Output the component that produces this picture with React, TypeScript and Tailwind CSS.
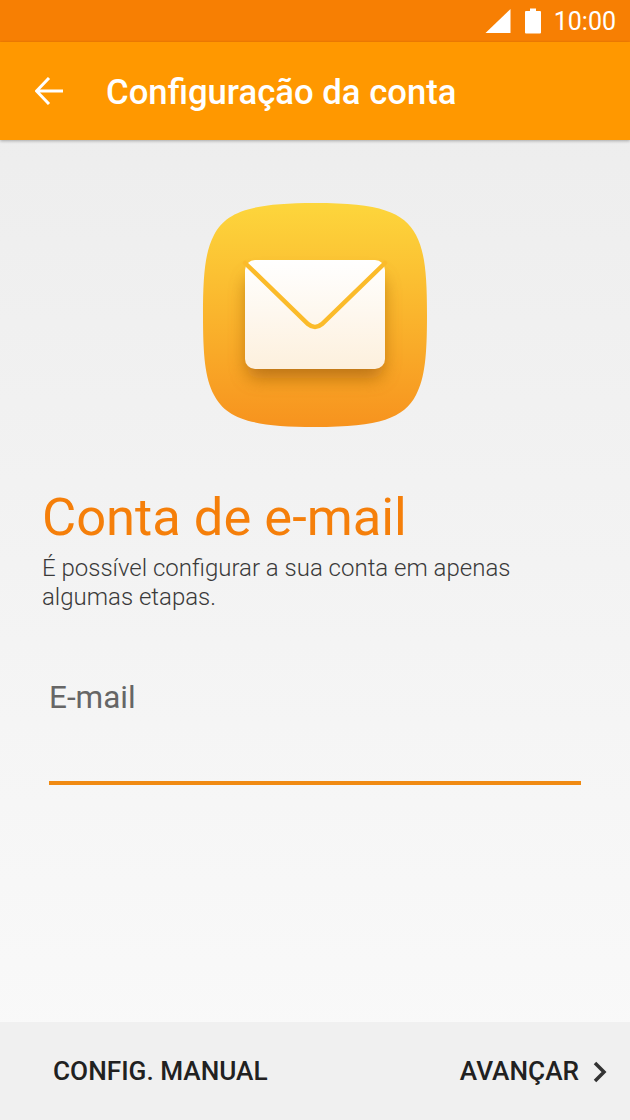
import React from "react";

function MailIcon() {
  return (
    <svg width="250" height="250" viewBox="0 0 250 250" aria-hidden="true">
      <defs>
        <linearGradient id="tile" x1="0" y1="0" x2="0" y2="1">
          <stop offset="0" stopColor="#fdd63c" />
          <stop offset="1" stopColor="#f7931e" />
        </linearGradient>
        <linearGradient id="paper" x1="0" y1="0" x2="0" y2="1">
          <stop offset="0" stopColor="#ffffff" />
          <stop offset="1" stopColor="#fdf0dd" />
        </linearGradient>
        <filter id="drop" x="-30%" y="-30%" width="160%" height="170%">
          <feGaussianBlur stdDeviation="9" />
        </filter>
      </defs>
      <path
        d="M125 13 C60 13 36 22 24 45 C15 62 13 85 13 125 C13 165 15 188 24 205 C36 228 60 237 125 237 C190 237 214 228 226 205 C235 188 237 165 237 125 C237 85 235 62 226 45 C214 22 190 13 125 13 Z"
        fill="url(#tile)"
      />
      <rect x="57" y="86" width="136" height="102" rx="10" fill="#a05f08" opacity="0.7" filter="url(#drop)" />
      <rect x="55" y="70" width="140" height="109" rx="10" fill="url(#paper)" />
      <path
        d="M55 73 L118 134 Q125 140 132 134 L195 73"
        fill="none"
        stroke="#fbbb2a"
        strokeWidth="4.5"
        strokeLinecap="round"
      />
    </svg>
  );
}

export default function App() {
  return (
    <div className="flex h-[1120px] w-[630px] flex-col overflow-hidden bg-gradient-to-b from-[#ececec] to-[#fafafa] font-['Roboto',sans-serif]">
      <div className="flex h-[42px] shrink-0 items-center justify-end bg-[#f77f03] pr-[14px] text-white">
        <svg width="26" height="26" viewBox="0 0 26 26" aria-hidden="true" className="mr-[13px]">
          <path d="M0.5 25 L25.5 1 V25 Z" fill="#ffffff" />
        </svg>
        <svg width="18" height="26" viewBox="0 0 18 26" aria-hidden="true" className="mr-[12px]">
          <path d="M6 0.5 H12 V3 H16 A1 1 0 0 1 17 4 V24.5 A1 1 0 0 1 16 25.5 H2 A1 1 0 0 1 1 24.5 V4 A1 1 0 0 1 2 3 H6 Z" fill="#ffffff" />
        </svg>
        <span className="text-[25px] leading-none">10:00</span>
      </div>

      <header className="z-10 flex h-[98px] shrink-0 items-center bg-[#ff9800] pl-[35px] text-white shadow-[0_1px_3px_rgba(0,0,0,0.3)]">
        <svg width="28" height="28" viewBox="0 0 28 28" aria-hidden="true" fill="none" stroke="#ffffff" strokeWidth="3">
          <path d="M28 14 H2 M14 1 L1.5 14 L14 27" />
        </svg>
        <h1 className="ml-[43px] pt-[2px] text-[34.7px] font-medium leading-none">Configuração da conta</h1>
      </header>

      <main className="flex min-h-0 flex-1 flex-col">
        <div className="mt-[50px] flex justify-center">
          <MailIcon />
        </div>
        <div className="pl-[42px] pr-[42px]">
          <h2 className="mt-[44px] text-[52.5px] leading-[66px] text-[#f57f0a]">Conta de e-mail</h2>
          <p className="mt-[4px] text-[24px] font-light leading-[29px] text-[#3a3a3a]">
            É possível configurar a sua conta em apenas algumas etapas.
          </p>
        </div>
        <div className="mx-[49px] mt-[68px] border-b-[4px] border-[#f08a12] pb-[66px] text-[31.5px] leading-[35px] text-[#666666]">
          E-mail
        </div>
      </main>

      <footer className="flex h-[98px] shrink-0 items-center justify-between bg-[#f0f0f0] pl-[53px] pr-[23px] pt-[2px] text-[26.2px] font-medium text-[#212121]">
        <span>CONFIG. MANUAL</span>
        <span className="flex items-center gap-[14px]">
          AVANÇAR
          <svg width="14" height="22" viewBox="0 0 14 22" aria-hidden="true" fill="none" stroke="#333333" strokeWidth="3.5">
            <path d="M2 2 L11 11 L2 20" />
          </svg>
        </span>
      </footer>
    </div>
  );
}
